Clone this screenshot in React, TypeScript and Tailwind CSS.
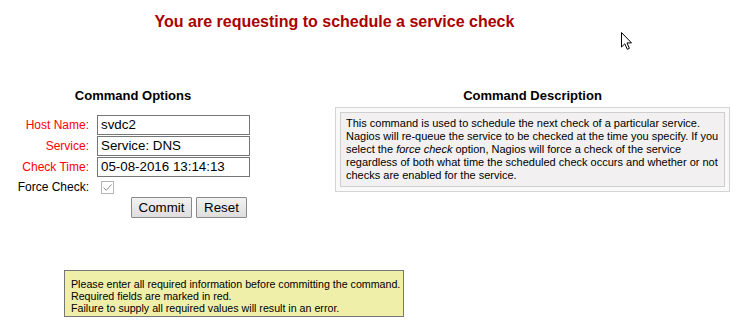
import React from "react";

function Cursor() {
  return (
    <svg
      className="absolute left-[620px] top-[31px]"
      width="13"
      height="20"
      viewBox="0 0 13 20"
    >
      <path
        d="M1.5 1.5 L1.5 16 L4.8 12.8 L7.3 18.3 L9.4 17.4 L7 11.9 L11.5 11.9 Z"
        fill="#ffffff"
        stroke="#000000"
        strokeWidth="1"
        strokeLinejoin="miter"
      />
    </svg>
  );
}

function Row({
  label,
  red,
  h = "h-[21px]",
  children,
}: {
  label: string;
  red?: boolean;
  h?: string;
  children: React.ReactNode;
}) {
  return (
    <div className={`flex items-center ${h}`}>
      <div
        className={`w-[90px] text-right text-[12px] pr-[1px] ${
          red ? "text-[#ff0000]" : "text-black"
        }`}
      >
        {label}
      </div>
      <div className="pl-[7px]">{children}</div>
    </div>
  );
}

function TextBox({ value }: { value: string }) {
  return (
    <div className="w-[153px] h-[20px] border border-[#767676] bg-white text-[13.33px] leading-[18px] px-[3px] text-black whitespace-nowrap overflow-hidden">
      {value}
    </div>
  );
}

function Button({ label, w }: { label: string; w: string }) {
  return (
    <div
      className={`${w} h-[21px] border border-[#8a8a8a] rounded-[1px] bg-gradient-to-b from-[#f2f2f2] to-[#dedede] text-[13.33px] leading-[19px] text-center text-black`}
    >
      {label}
    </div>
  );
}

export default function App() {
  return (
    <div
      className="relative w-[740px] h-[333px] bg-white text-black overflow-hidden"
      style={{ fontFamily: '"Liberation Sans", Arial, sans-serif' }}
    >
      <div className="w-[669px] pt-[12px] text-center text-[16px] leading-[19px] font-bold text-[#aa0000]">
        You are requesting to schedule a service check
      </div>

      <div className="flex mt-[57px]">
        <div className="w-[266px] flex flex-col">
          <div className="text-center text-[13px] leading-[16px] font-bold">
            Command Options
          </div>
          <div className="pt-[10px] flex flex-col">
            <Row label="Host Name:" red>
              <TextBox value="svdc2" />
            </Row>
            <Row label="Service:" red>
              <TextBox value="Service: DNS" />
            </Row>
            <Row label="Check Time:" red>
              <TextBox value="05-08-2016 13:14:13" />
            </Row>
            <Row label="Force Check:" h="h-[20px]">
              <div className="ml-[4px] w-[13px] h-[13px] border border-[#b5b5b5] bg-white flex items-center justify-center">
                <svg width="11" height="11" viewBox="0 0 11 11">
                  <path
                    d="M1.5 5.5 L4.3 8.3 L9.5 2.5"
                    fill="none"
                    stroke="#8f8f8f"
                    strokeWidth="1"
                  />
                </svg>
              </div>
            </Row>
            <div className="flex gap-[4px] pl-[131px]">
              <Button label="Commit" w="w-[61px]" />
              <Button label="Reset" w="w-[51px]" />
            </div>
          </div>
        </div>

        <div className="ml-[69px] w-[395px] flex flex-col">
          <div className="text-center text-[13px] leading-[16px] font-bold">
            Command Description
          </div>
          <div className="mt-[3px] border border-[#d4d4d4] bg-[#f9f9f9] p-[4px]">
            <div className="border border-[#cfcfcf] bg-[#f2f0f0] px-[5px] pt-[4px] pb-[4px] text-[11px] leading-[13px] text-black">
              This command is used to schedule the next check of a particular
              service. Nagios will re-queue the service to be checked at the
              time you specify. If you select the <i>force check</i> option,
              Nagios will force a check of the service regardless of both what
              time the scheduled check occurs and whether or not checks are
              enabled for the service.
            </div>
          </div>
        </div>
      </div>

      <div className="ml-[64px] mt-[52px] w-[340px] border border-[#777777] bg-[#efefaa] px-[6px] pt-[7px] pb-[2px] text-[10.67px] leading-[12px] text-black whitespace-nowrap">
        <div>Please enter all required information before committing the command.</div>
        <div>Required fields are marked in red.</div>
        <div>Failure to supply all required values will result in an error.</div>
      </div>

      <Cursor />
    </div>
  );
}
